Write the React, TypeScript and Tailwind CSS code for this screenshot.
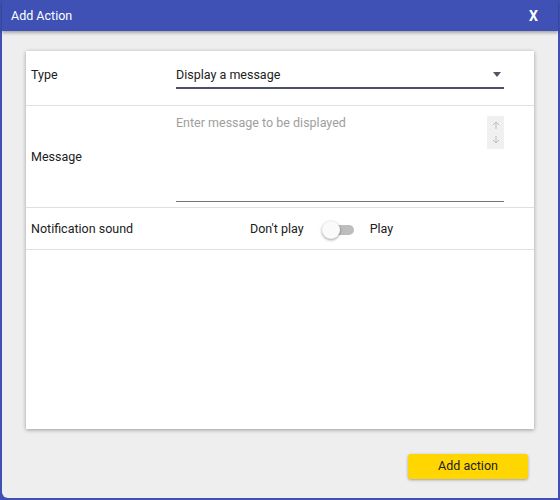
import React from "react";

export default function App() {
  return (
    <div className="w-[560px] h-[500px] flex flex-col bg-[#3f51b5] p-[2px] pt-0" style={{ fontFamily: "Roboto, 'Liberation Sans', sans-serif" }}>
      <div className="h-[31px] flex items-center justify-between pl-[9px] pr-[20px] pt-[2px] text-white shrink-0 shadow-[0_2px_3px_rgba(0,0,0,0.3)] relative z-10">
        <span className="text-[12.5px]">Add Action</span>
        <span className="text-[14px] font-bold">X</span>
      </div>
      <div className="flex-1 bg-[#eeeeee] rounded-bl-[6px] flex flex-col pl-[24px] pr-[24px] pt-[20px] pb-[19px]">
        <div className="h-[378px] bg-white shadow-[0_1px_4px_rgba(0,0,0,0.35)] flex flex-col text-[12.5px] text-[#212121]">
          <div className="h-[55px] flex items-start border-b border-[#e0e0e0] pl-[5px] pr-[30px]">
            <div className="w-[145px] pt-[16px] leading-[16px]">Type</div>
            <div className="flex-1 mt-[16px] flex items-start justify-between border-b-2 border-[#4d5066] pb-[4px] leading-[16px]">
              <span>Display a message</span>
              <svg width="10" height="6" viewBox="0 0 10 6" className="mr-[2px] mt-[5px]">
                <path d="M1 0 L9 0 L5 5 Z" fill="#505466" />
              </svg>
            </div>
          </div>
          <div className="h-[102px] flex items-center border-b border-[#e0e0e0] pl-[5px] pr-[30px]">
            <div className="w-[145px] pt-[2px]">Message</div>
            <div className="flex-1 self-stretch flex flex-col pt-[9px] pb-[5px]">
              <div className="flex-1 flex justify-between border-b border-[#757575]">
                <span className="text-[#9e9e9e] leading-[16px]">Enter message to be displayed</span>
                <div className="w-[17px] h-[33px] mt-[1px] bg-[#f0f0f0] flex flex-col items-center justify-around py-[2px]">
                  <svg width="8" height="9" viewBox="0 0 8 9"><path d="M4 1 L4 8 M1 4 L4 1 L7 4" stroke="#bdbdbd" strokeWidth="1" fill="none" /></svg>
                  <svg width="8" height="9" viewBox="0 0 8 9"><path d="M4 1 L4 8 M1 5 L4 8 L7 5" stroke="#bdbdbd" strokeWidth="1" fill="none" /></svg>
                </div>
              </div>
            </div>
          </div>
          <div className="h-[42px] flex items-center border-b border-[#e0e0e0] pl-[5px] pr-[30px] pt-[2px]">
            <div className="w-[219px]">Notification sound</div>
            <span>Don't play</span>
            <div className="relative w-[34px] h-[20px] ml-[18px] mr-[14px] flex items-center">
              <div className="absolute left-[6px] right-[2px] h-[10px] rounded-full bg-[#bdbdbd]"></div>
              <div className="absolute left-0 w-[18px] h-[18px] rounded-full bg-[#fafafa] shadow-[0_1px_3px_rgba(0,0,0,0.4)]"></div>
            </div>
            <span>Play</span>
          </div>
        </div>
        <div className="flex-1 flex items-end justify-end pr-[6px]">
          <button className="w-[120px] h-[25px] rounded-[3px] bg-[#ffd600] text-[12.5px] text-[#212121] shadow-[0_1px_3px_rgba(0,0,0,0.35)]">Add action</button>
        </div>
      </div>
    </div>
  );
}
